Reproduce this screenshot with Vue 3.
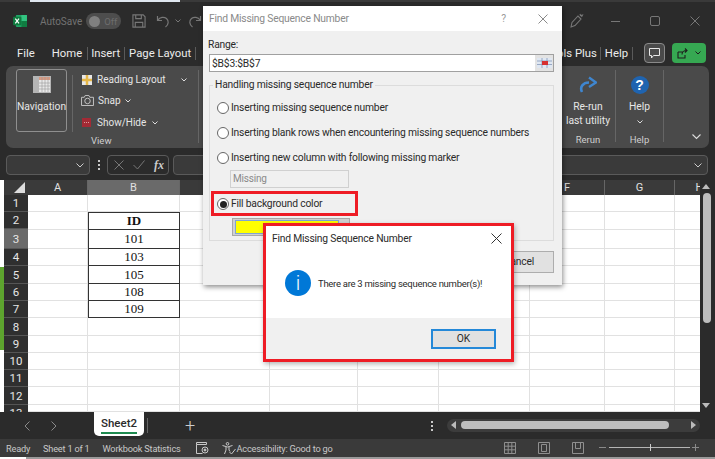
<script setup>
const colWidths = [60, 92, 90, 88, 81, 91, 75, 70, 50]
const colNames = ['A', 'B', 'C', 'D', 'E', '', 'F', 'G', 'H']
const rowHeights = [17, 17, 20, 17, 18, 17, 17, 18, 17, 17, 17, 18, 7]
const table = { 2: 'ID', 3: '101', 4: '103', 5: '105', 6: '108', 7: '109' }
const rows = rowHeights.map((h, i) => ({ n: i + 1, h, value: table[i + 1] || '' }))
const gridCols = colWidths.map((w) => w + 'px').join(' ')
const tabsLeft = [
  { label: 'File', cls: 'tab-file' },
  { label: 'Home', cls: 'tab-home' },
  { label: 'Insert', cls: 'tab-ins' },
  { label: 'Page Layout', cls: 'tab-page' },
]
</script>

<template>
  <div class="screen">
    <div class="strip-top"><span class="strip-blue"></span></div>
    <header class="titlebar">
      <svg class="xl" width="14" height="12" viewBox="0 0 15 13">
        <rect x="3" width="12" height="13" rx="1" fill="#21a366" />
        <rect x="9" width="6" height="6.5" fill="#33c481" />
        <rect x="9" y="6.5" width="6" height="6.5" fill="#107c41" />
        <rect y="2" width="9" height="9" rx="1" fill="#0f7b3f" />
        <path d="M2.4 4 L6.4 9 M6.4 4 L2.4 9" stroke="#fff" stroke-width="1.3" />
      </svg>
      <span class="autosave">AutoSave</span>
      <span class="toggle"><i></i><b>Off</b></span>
      <svg class="ic-save" width="14" height="14" viewBox="0 0 15 15" fill="none" stroke="#777" stroke-width="1.2">
        <path d="M1 1h11l2 2v11H1z" /><path d="M4 1v4h6V1M3.5 14V9h8v5" />
      </svg>
      <svg class="ic-undo" width="14" height="14" viewBox="0 0 14 14" fill="none" stroke="#777" stroke-width="1.2">
        <path d="M1.5 2v4.5H6M1.8 6.2C4 3 8 2.5 10.5 4.5c2.5 2.2 2.3 6-1 8.5" />
      </svg>
      <svg class="ic-chev" width="6" height="4" viewBox="0 0 6 4" fill="none" stroke="#777"><path d="M.5.5 3 3 5.5.5" /></svg>
      <svg class="ic-redo" width="14" height="14" viewBox="0 0 14 14" fill="none" stroke="#777" stroke-width="1.2">
        <path d="M12.5 2v4.500H8M12.200 6.200C10 3 6 2.500 3.500 4.500c-2.500 2.200-2.300 6 1 8.500" />
      </svg>
      <span class="grow"></span>
      <svg class="ic-pen" width="14" height="16" viewBox="0 0 14 16" fill="none" stroke="#777" stroke-width="1.1">
        <path d="M1 14 2 9.500 8 3l3 3-6 6.500zM1 14l4-1.500M10 1l.5 1.500L12.500 2 11.500 4" />
      </svg>
      <span class="win-btn"><i class="min"></i></span>
      <span class="win-btn"><i class="max"></i></span>
      <span class="win-btn">
        <svg width="10" height="10" viewBox="0 0 10 10" stroke="#777"><path d="M.5.5l9 9M9.500.5l-9 9" /></svg>
      </span>
    </header>

    <nav class="tabs">
      <span v-for="t in tabsLeft" :key="t.label" :class="['tab', t.cls]">{{ t.label }}</span>
      <span class="grow"></span>
      <span class="tab tab-plus">ols Plus</span>
      <span class="tab tab-help">Help</span>
      <span class="tab-btn comment">
        <svg width="11" height="11" viewBox="0 0 11 11" fill="none" stroke="#e6e6e6">
          <path d="M.5.500h10v7H4.500L2.500 10V7.500h-2z" />
        </svg>
      </span>
      <span class="tab-btn share">
        <svg width="11" height="11" viewBox="0 0 11 11" fill="none" stroke="#1d1d1d" stroke-width="1.100">
          <path d="M1 4h5M1 4v6h7V7M5 6.500C5 4 7 2.500 9.500 2.500M8 .5l2 2-2 2" />
        </svg>
        <svg width="6" height="4" viewBox="0 0 6 4" fill="none" stroke="#1d1d1d"><path d="M.5.5 3 3 5.500.5" /></svg>
      </span>
    </nav>

    <section class="ribbon">
      <div class="rb-nav-btn">
        <svg width="18" height="17" viewBox="0 0 18 17">
          <rect width="18" height="17" fill="#b5b5b5" />
          <rect x="6" y="1" width="11" height="15" fill="#e8e8e8" />
          <rect x="6" y="1" width="11" height="3" fill="#d89a82" />
          <path d="M9 1v15M12 1v15M15 1v15M6 7h11M6 10h11M6 13h11" stroke="#999" stroke-width=".6" />
        </svg>
        <span>Navigation</span>
      </div>
      <i class="rb-sep s1"></i>
      <div class="rb-view">
        <div class="rb-line l1">
          <svg width="10" height="10" viewBox="0 0 10 10"><rect width="10" height="10" fill="#e8e8e8" /><path d="M5 0v10M0 5h10" stroke="#e6b84a" stroke-width="2.500" /></svg>
          <span>Reading Layout</span>
          <svg class="cv" width="6" height="4" viewBox="0 0 6 4" fill="none" stroke="#ddd"><path d="M.5.5 3 3 5.500.5" /></svg>
        </div>
        <div class="rb-line l2">
          <svg width="13" height="11" viewBox="0 0 14 12" fill="none" stroke="#ccc"><path d="M.5 2.500h3l1-2h4l1 2h4v9H.5z" /><circle cx="7" cy="6.500" r="3" /></svg>
          <span>Snap</span>
          <svg width="6" height="4" viewBox="0 0 6 4" fill="none" stroke="#ddd"><path d="M.5.5 3 3 5.500.5" /></svg>
        </div>
        <div class="rb-line l3">
          <svg width="9" height="9" viewBox="0 0 9 9"><rect width="9" height="9" fill="#a32a35" /><path d="M2 4.500h5" stroke="#d8a0a0" stroke-dasharray="1 1" /></svg>
          <span>Show/Hide</span>
          <svg width="6" height="4" viewBox="0 0 6 4" fill="none" stroke="#ddd"><path d="M.5.5 3 3 5.500.5" /></svg>
        </div>
        <div class="rb-group">View</div>
      </div>
      <i class="rb-sep s2"></i>
      <span class="grow"></span>
      <div class="rb-col rerun">
        <svg width="18" height="18" viewBox="0 0 18 18" fill="none">
          <path d="M3 16C.5 11 4 6.500 10 6.500" stroke="#3f86cf" stroke-width="2.600" />
          <path d="M10 1.500 17 6.500 10 11" stroke="#3f86cf" stroke-width="2.400" />
        </svg>
        <span class="rb-t1">Re-run</span>
        <span class="rb-t2">last utility</span>
        <span class="rb-group">Rerun</span>
      </div>
      <i class="rb-sep s3"></i>
      <div class="rb-col help">
        <span class="qmark">?</span>
        <span class="rb-t1">Help</span>
        <svg class="rb-t2c" width="6" height="4" viewBox="0 0 6 4" fill="none" stroke="#ddd"><path d="M.5.5 3 3 5.500.5" /></svg>
        <span class="rb-group">Help</span>
      </div>
      <i class="rb-sep s3"></i>
      <svg class="rb-collapse" width="9" height="6" viewBox="0 0 9 6" fill="none" stroke="#ddd" stroke-width="1.100"><path d="M.5.500 4.500 4.500 8.500.5" /></svg>
    </section>

    <div class="formula">
      <div class="namebox"><svg width="8" height="5" viewBox="0 0 8 5" fill="none" stroke="#ccc"><path d="M.5.500 4 4 7.500.5" /></svg></div>
      <span class="dots"><i></i><i></i><i></i></span>
      <div class="fx-box">
        <svg width="10" height="10" viewBox="0 0 10 10" fill="none" stroke="#777"><path d="M.5.5l9 9M9.500.5l-9 9" /></svg>
        <svg width="12" height="10" viewBox="0 0 12 10" fill="none" stroke="#777"><path d="M.5 5l4 4 7-8.500" /></svg>
        <span class="fx">fx</span>
      </div>
      <div class="f-input"><svg width="8" height="5" viewBox="0 0 8 5" fill="none" stroke="#ccc"><path d="M.5.500 4 4 7.500.5" /></svg></div>
    </div>

    <div class="sheet-area">
      <div class="side-strip"><i class="side-green"></i></div>
      <div class="grid-wrap">
        <div class="col-head">
          <span class="corner"><i></i></span>
          <div class="col-names" :style="{ gridTemplateColumns: gridCols }">
            <span v-for="(c, i) in colNames" :key="i" :class="['cn', { sel: c === 'B' }]">{{ c }}</span>
          </div>
        </div>
        <div v-for="r in rows" :key="r.n" class="row" :style="{ height: r.h + 'px' }">
          <span :class="['rn', { sel: r.n === 3, last: r.n === 13 }]">{{ r.n }}</span>
          <div class="cells" :style="{ gridTemplateColumns: gridCols }">
            <span
              v-for="(c, i) in colNames"
              :key="i"
              :class="['cell', { data: i === 1 && r.value, head: i === 1 && r.n === 2 }]"
            >{{ i === 1 ? r.value : '' }}</span>
          </div>
        </div>
      </div>
      <div class="vscroll">
        <i class="up"></i>
        <i class="thumb"></i>
        <i class="down"></i>
      </div>
    </div>

    <div class="sheetbar">
      <svg class="arr a1" width="6" height="10" viewBox="0 0 6 10" fill="none" stroke="#8a8a8a"><path d="M5.500.5 1 5l4.500 4.500" /></svg>
      <svg class="arr a2" width="6" height="10" viewBox="0 0 6 10" fill="none" stroke="#8a8a8a"><path d="M.5.5 5 5 .5 9.500" /></svg>
      <span class="sheet-tab"><span>Sheet2</span></span>
      <i class="sb-sep"></i>
      <span class="plus">+</span>
      <span class="grow"></span>
      <span class="dots bar-dots"><i></i><i></i><i></i></span>
      <div class="hscroll">
        <i class="tri-l"></i>
        <i class="h-thumb"></i>
        <i class="tri-r"></i>
      </div>
    </div>

    <footer class="status">
      <span class="st ready">Ready</span>
      <span class="st sheet-n">Sheet 1 of 1</span>
      <span class="st stats">Workbook Statistics</span>
      <svg class="st-macro" width="13" height="12" viewBox="0 0 13 12" fill="none" stroke="#c8c8c8">
        <path d="M.5 2.500V.5h10v2M.5 2.500h10M.5 2.500v9h6" /><circle cx="9" cy="8" r="3" /><circle cx="9" cy="8" r="1" fill="#c8c8c8" />
      </svg>
      <svg class="st-acc" width="14" height="13" viewBox="0 0 14 13" fill="none" stroke="#c8c8c8">
        <circle cx="5.500" cy="1.800" r="1.300" /><path d="M.5 3.500 5.500 5l5-1.500M4 5v3l-1.500 4M7 5v3l1 1.500M7.500 10l2 2 4-5" />
      </svg>
      <span class="st acc">Accessibility: Good to go</span>
      <span class="grow"></span>
      <svg class="st-v" width="12" height="12" viewBox="0 0 12 12" fill="none" stroke="#8f8f8f"><path d="M.5.500h11v11H.5zM4.200.5v11M7.800.5v11M.5 4.200h11M.5 7.800h11" /></svg>
      <svg class="st-v" width="12" height="12" viewBox="0 0 12 12" fill="none" stroke="#8f8f8f"><path d="M.5.500h11v11H.5zM3.500 2.500h5v7h-5z" /></svg>
      <svg class="st-v last" width="12" height="12" viewBox="0 0 12 12" fill="none" stroke="#8f8f8f"><path d="M.5.500h11v11H.5zM3.500.5v6h5v-6" /></svg>
      <div class="zoom"><i class="z-minus"></i><i class="z-line"></i><i class="z-knob"></i><i class="z-plus"></i></div>
    </footer>
    <div class="strip-bottom"></div>

    <!-- main dialog -->
    <div class="dlg">
      <div class="dlg-title">
        <span>Find Missing Sequence Number</span>
        <span class="grow"></span>
        <span class="dlg-q">?</span>
        <svg width="10" height="10" viewBox="0 0 10 10" stroke="#8a8a8a"><path d="M.5.5l9 9M9.500.5l-9 9" /></svg>
      </div>
      <div class="dlg-body">
        <div class="lbl">Range:</div>
        <div class="range">
          <span>$B$3:$B$7</span>
          <span class="range-btn">
            <svg width="15" height="10" viewBox="0 0 15 10">
              <rect width="15" height="10" fill="#dfe7f2" />
              <path d="M0 3h15M0 6.500h15M5 0v10M10 0v10" stroke="#7a8db0" stroke-width=".7" />
              <rect x="5" y="3" width="6" height="4" fill="#d62f2f" />
            </svg>
          </span>
        </div>
        <fieldset class="group">
          <legend>Handling missing sequence number</legend>
          <div class="radio r1"><i class="rd"></i>Inserting missing sequence number</div>
          <div class="radio r2"><i class="rd"></i>Inserting blank rows when encountering missing sequence numbers</div>
          <div class="radio r2"><i class="rd"></i>Inserting new column with following missing marker</div>
          <div class="marker">Missing</div>
          <div class="radio on"><i class="rd"><b></b></i>Fill background color</div>
          <div class="color-btn"><i></i></div>
        </fieldset>
        <div class="dlg-actions"><span class="cancel">Cancel</span></div>
      </div>
    </div>

    <!-- message box -->
    <div class="msg">
      <div class="msg-title">
        <span>Find Missing Sequence Number</span>
        <svg width="11" height="11" viewBox="0 0 11 11" stroke="#333"><path d="M.5.5l10 10M10.500.5l-10 10" /></svg>
      </div>
      <div class="msg-main">
        <span class="info">i</span>
        <span class="msg-text">There are 3 missing sequence number(s)!</span>
      </div>
      <div class="msg-foot"><span class="ok">OK</span></div>
    </div>
  </div>
</template>

<style scoped>
.screen {
  position: relative;
  width: 715px;
  height: 459px;
  overflow: hidden;
  display: flex;
  flex-direction: column;
  background: #2b2b2b;
  font-family: Roboto, "Noto Sans", sans-serif;
  color: #e6e6e6;
  font-size: 11px;
}
.grow { flex: 1; }
.strip-top { height: 2px; flex: none; background: #3a3a3a; }
.strip-blue { display: block; width: 150px; height: 2px; margin-left: 30px; background: #dfe6ef; }
.titlebar { height: 38px; flex: none; display: flex; align-items: center; padding: 0 0 0 13px; }
.autosave { margin-left: 13px; color: #737373; font-size: 10px; white-space: nowrap; }
.toggle { margin-left: 4px; width: 35px; height: 16px; border-radius: 8px; background: #4d4d4d; display: flex; align-items: center; padding-left: 3px; box-sizing: border-box; flex: none; }
.toggle i { width: 11px; height: 11px; border-radius: 50%; background: #808080; }
.toggle b { margin-left: 4px; font-weight: 400; font-size: 9.500px; color: #6d6d6d; }
.ic-save { margin-left: 11px; }
.ic-undo { margin-left: 10px; }
.ic-chev { margin-left: 5px; }
.ic-redo { margin-left: 7px; }
.win-btn { width: 40px; display: flex; justify-content: center; align-items: center; }
.win-btn .min { width: 9px; height: 1px; background: #777; }
.win-btn .max { width: 8px; height: 8px; border: 1px solid #777; border-radius: 2px; }
.ic-pen { margin-right: 11px; }

.tabs { height: 26px; flex: none; display: flex; align-items: center; font-size: 11.300px; position: relative; padding-right: 9px; }
.tab { white-space: nowrap; color: #ececec; }
.tab-file { margin-left: 17px; }
.tab-home { margin-left: 17px; padding-right: 5px; border-right: 1px solid #5a5a5a; }
.tab-ins { margin-left: 3px; padding-right: 4px; border-right: 1px solid #5a5a5a; }
.tab-page { margin-left: 4px; padding-right: 4px; border-right: 1px solid #5a5a5a; }
.tab-plus { padding-right: 3px; border-right: 1px solid #5a5a5a; }
.tab-help { margin-left: 4px; padding-right: 4px; border-right: 1px solid #5a5a5a; margin-right: 11px; }
.tab-btn { height: 20px; border-radius: 4px; display: flex; align-items: center; justify-content: center; box-sizing: border-box; }
.comment { width: 21px; border: 1px solid #8a8a8a; background: #4a4a4a; }
.share { width: 34px; margin-left: 7px; background: #36a852; gap: 7px; }

.ribbon { height: 82px; flex: none; margin: 0 6px; border-radius: 7px; background: #4a4a4a; display: flex; align-items: stretch; padding: 3px 0 3px 10px; box-sizing: border-box; }
.rb-nav-btn { width: 51px; height: 63px; border: 1px solid #8f8f8f; border-radius: 3px; box-sizing: border-box; display: flex; flex-direction: column; align-items: center; padding-top: 6px; gap: 7px; font-size: 10.300px; }
.rb-nav-btn span { white-space: nowrap; }
.rb-sep { flex: none; width: 1px; background: #666; }
.s1 { margin: 6px 7px 13px 5px; }
.s2 { margin: 1px 0 2px 0; }
.s3 { margin: 1px 0 3px 0; }
.rb-view { width: 111px; display: flex; flex-direction: column; font-size: 10px; position: relative; margin-right: 7px; }
.rb-line { display: flex; align-items: center; gap: 5px; height: 21px; white-space: nowrap; flex: none; }
.l1 { padding-left: 2px; }
.l2 { gap: 4px; padding-left: 1px; }
.l3 { padding-left: 2px; gap: 6px; position: relative; top: 1px; }
.cv { margin-left: 10px; }
.rb-group { font-size: 9.500px; color: #cfcfcf; }
.rb-view .rb-group { margin-top: 3px; padding-left: 11px; }
.rb-col { display: flex; flex-direction: column; align-items: center; position: relative; font-size: 10.300px; }
.rerun { width: 54px; padding-top: 7px; }
.help { width: 47px; padding-top: 7px; }
.rb-t1 { margin-top: 6px; line-height: 14px; }
.rb-t2 { line-height: 14px; white-space: nowrap; }
.rb-t2c { margin-top: 6px; }
.rb-col .rb-group { position: absolute; top: 65px; }
.qmark { width: 18px; height: 18px; border-radius: 50%; background: #1f64b0; color: #fff; font: bold 14px/18px "Liberation Sans", sans-serif; text-align: center; }
.rb-collapse { align-self: flex-end; margin: 0 8px 5px 28px; }

.formula { height: 20px; flex: none; margin: 7px 7px 5px 6px; display: flex; gap: 0; }
.namebox { width: 84px; box-sizing: border-box; border: 1px solid #5a5a5a; border-radius: 4px; background: #3a3a3a; display: flex; align-items: center; justify-content: flex-end; padding-right: 5px; }
.dots { display: flex; flex-direction: column; gap: 2px; align-items: center; justify-content: center; width: 17px; }
.dots i { width: 2px; height: 2px; background: #c9c9c9; }
.fx-box { width: 62px; box-sizing: border-box; border: 1px solid #5a5a5a; border-radius: 4px; display: flex; align-items: center; gap: 9px; padding-left: 6px; }
.fx { font: italic 700 12px "Liberation Serif", serif; color: #ccc; }
.f-input { flex: 1; margin-left: 4px; box-sizing: border-box; border: 1px solid #5a5a5a; border-radius: 4px; background: #3a3a3a; display: flex; align-items: center; justify-content: flex-end; padding-right: 5px; }

.sheet-area { height: 232px; flex: none; display: flex; background: #2b2b2b; }
.side-strip { width: 4px; flex: none; background: #fff; position: relative; }
.side-green { position: absolute; left: 0; top: 87px; width: 4px; height: 83px; background: #5da42e; }
.grid-wrap { width: 696px; flex: none; background: #fff; overflow: hidden; }
.col-head { height: 15px; display: flex; background: #3a3a3a; }
.corner { width: 24px; flex: none; display: flex; justify-content: flex-end; align-items: flex-end; padding: 0 3px 2px 0; box-sizing: border-box; }
.corner i { width: 0; height: 0; border-left: 11px solid transparent; border-bottom: 11px solid #ddd; }
.col-names, .cells { display: grid; flex: none; }
.cn { text-align: center; font-size: 11px; line-height: 15px; color: #e0e0e0; border-right: 1px solid #666; }
.cn.sel { background: #6a6a6a; }
.row { display: flex; }
.rn { width: 24px; flex: none; box-sizing: border-box; background: #2f2f2f; color: #e6e6e6; font-size: 11.500px; border-bottom: 1px solid #555; display: flex; align-items: center; justify-content: center; overflow: hidden; }
.rn.sel { background: #6a6a6a; }
.rn.last { align-items: flex-start; line-height: 17px; border-bottom: 0; padding-top: 0; }
.cell { box-sizing: border-box; border-right: 1px solid #e1e1e1; border-bottom: 1px solid #e1e1e1; display: flex; align-items: center; justify-content: center; font: 13px "Liberation Serif", serif; color: #111; }
.cell.data { border: 1px solid #333; border-top: 0; }
.cell.head { border-top: 1px solid #333; font-weight: 700; }
.vscroll { flex: 1; position: relative; background: #2b2b2b; }
.vscroll .up { position: absolute; left: 2px; top: 4px; border: 4px solid transparent; border-bottom: 5px solid #bbb; border-top: 0; }
.vscroll .down { position: absolute; left: 2px; bottom: 4px; border: 4px solid transparent; border-top: 5px solid #bbb; border-bottom: 0; }
.vscroll .thumb { position: absolute; left: 3px; top: 13px; width: 8px; height: 130px; border-radius: 4px; background: #bdbdbd; }

.sheetbar { height: 27px; flex: none; background: #2b2b2b; display: flex; align-items: center; padding-left: 24px; }
.a2 { margin-left: 21px; }
.sheet-tab { margin-left: 37px; width: 50px; height: 24px; align-self: flex-start; box-sizing: border-box; border-radius: 0 0 5px 5px; background: #fff; color: #2b2b2b; font-size: 11.500px; font-weight: 500; text-align: center; padding-top: 3px; }
.sheet-tab span { display: inline-block; border-bottom: 2px solid #1e8a4f; line-height: 17px; }
.sb-sep { width: 1px; height: 15px; background: #666; margin-left: 3px; }
.plus { margin-left: 37px; font-size: 18px; font-weight: 300; color: #ccc; line-height: 1; }
.bar-dots { width: 6px; margin-right: 12px; }
.hscroll { width: 253px; height: 13px; margin-right: 15px; border-radius: 7px; background: #3c3c3c; position: relative; }
.h-thumb { position: absolute; left: 14px; top: 2px; width: 208px; height: 8px; border-radius: 4px; background: #bdbdbd; }
.tri-l { position: absolute; left: 4px; top: 2px; border: 4px solid transparent; border-right: 5px solid #bbb; border-left: 0; }
.tri-r { position: absolute; right: 4px; top: 2px; border: 4px solid transparent; border-left: 5px solid #bbb; border-right: 0; }

.status { height: 18px; flex: none; background: #3a3a3a; display: flex; align-items: center; font-size: 9.200px; letter-spacing: -.2px; color: #c8c8c8; padding-left: 6px; }
.st { white-space: nowrap; }
.sheet-n { margin-left: 13px; }
.stats { margin-left: 13px; }
.st-macro { margin-left: 15px; }
.st-acc { margin-left: 13px; }
.acc { margin-left: 1px; }
.st-v { margin-right: 22px; }
.st-v.last { margin-right: 14px; }
.zoom { width: 103px; height: 12px; margin-right: 14px; position: relative; }
.z-minus { position: absolute; left: 1px; top: 5px; width: 7px; height: 1px; background: #8a8a8a; }
.z-plus { position: absolute; right: 2px; top: 2px; width: 7px; height: 7px; background: linear-gradient(#8a8a8a, #8a8a8a) center/7px 1px no-repeat, linear-gradient(#8a8a8a, #8a8a8a) center/1px 7px no-repeat; }
.z-line { position: absolute; left: 11px; right: 11px; top: 5px; height: 1px; background: #b5b5b5; }
.z-knob { position: absolute; left: 52px; top: 2px; width: 1px; height: 7px; background: #ccc; }
.strip-bottom { height: 2px; flex: none; background: linear-gradient(90deg, #fff 26px, #9a9a9a 26px); }

.dlg { position: absolute; left: 203px; top: 6px; width: 359px; height: 279px; background: #f0f0f0; box-shadow: 1px 2px 5px rgba(0,0,0,.45); color: #2a2a2a; font-size: 10.300px; letter-spacing: -.2px; }
.dlg-title { height: 25px; background: #fff; display: flex; align-items: center; padding: 0 14px 0 6px; color: #8a8a8a; }
.dlg-q { margin-right: 32px; color: #9a9a9a; }
.dlg-body { padding: 6px 8px 0 5px; }
.lbl { line-height: 15px; }
.range { margin: 2px 0 0 1px; height: 18px; box-sizing: border-box; border: 1px solid #a0a0a0; background: #fff; display: flex; align-items: center; justify-content: space-between; padding-left: 2px; }
.range-btn { width: 18px; height: 16px; background: #e3e3e3; display: flex; align-items: center; justify-content: center; }
.group { margin: 6px 0 0 1px; padding: 0; height: 163px; box-sizing: border-box; border: 1px solid #dcdcdc; position: relative; }
.group legend { margin-left: 3px; padding: 0 2px; line-height: 14px; }
.radio { display: flex; align-items: center; gap: 2px; white-space: nowrap; line-height: 14px; margin-left: 7px; }
.r1 { margin-top: 9px; }
.r2 { margin-top: 11px; }
.on { margin: 3px 0 0 1px; width: 147px; height: 25px; box-sizing: border-box; border: 3px solid #ee1c25; padding: 1px 0 0 3px; }
.rd { width: 12px; height: 12px; box-sizing: border-box; border-radius: 50%; border: 1px solid #666; background: #fff; display: flex; align-items: center; justify-content: center; flex: none; }
.rd b { width: 7px; height: 7px; border-radius: 50%; background: #222; }
.marker { margin: 5px 0 0 20px; width: 119px; height: 18px; box-sizing: border-box; border: 1px solid #d0d0d0; background: #f0f0f0; color: #8a8a8a; font-size: 10px; line-height: 16px; padding-left: 2px; }
.color-btn { margin: 2px 0 0 22px; width: 118px; height: 18px; box-sizing: border-box; background: #d0d0d0; border: 1px solid #a8a8a8; padding: 2px 3px; }
.color-btn i { display: block; width: 102px; height: 12px; background: #ff0; outline: 1px solid #7fa4d4; }
.dlg-actions { display: flex; justify-content: flex-end; margin-top: 10px; }
.cancel { width: 70px; height: 22px; box-sizing: border-box; border: 1px solid #adadad; background: #e1e1e1; text-align: center; line-height: 20px; }

.msg { position: absolute; left: 263px; top: 223px; width: 251px; height: 139px; box-sizing: border-box; border: 3px solid #ee1c25; background: #fff; color: #2a2a2a; display: flex; flex-direction: column; box-shadow: 1px 2px 5px rgba(0,0,0,.3); }
.msg-title { height: 23px; flex: none; display: flex; align-items: center; justify-content: space-between; padding: 1px 9px 0 6px; font-size: 10.300px; letter-spacing: -.2px; }
.msg-main { flex: 1; display: flex; align-items: center; padding: 0 0 2px 19px; }
.info { width: 26px; height: 26px; border-radius: 50%; background: #0078d7; color: #fff; text-align: center; font: 300 20px/26px Roboto, sans-serif; flex: none; }
.msg-text { margin-left: 7px; font-size: 9.500px; letter-spacing: -.28px; white-space: nowrap; }
.msg-foot { height: 41px; flex: none; background: #f0f0f0; display: flex; justify-content: flex-end; align-items: center; padding-right: 15px; }
.ok { width: 65px; height: 20px; box-sizing: border-box; border: 2px solid #2488d8; background: #e1e1e1; text-align: center; line-height: 16px; font-size: 10.300px; }
</style>

<style>
html, body { margin: 0; background: #2b2b2b; }
</style>
